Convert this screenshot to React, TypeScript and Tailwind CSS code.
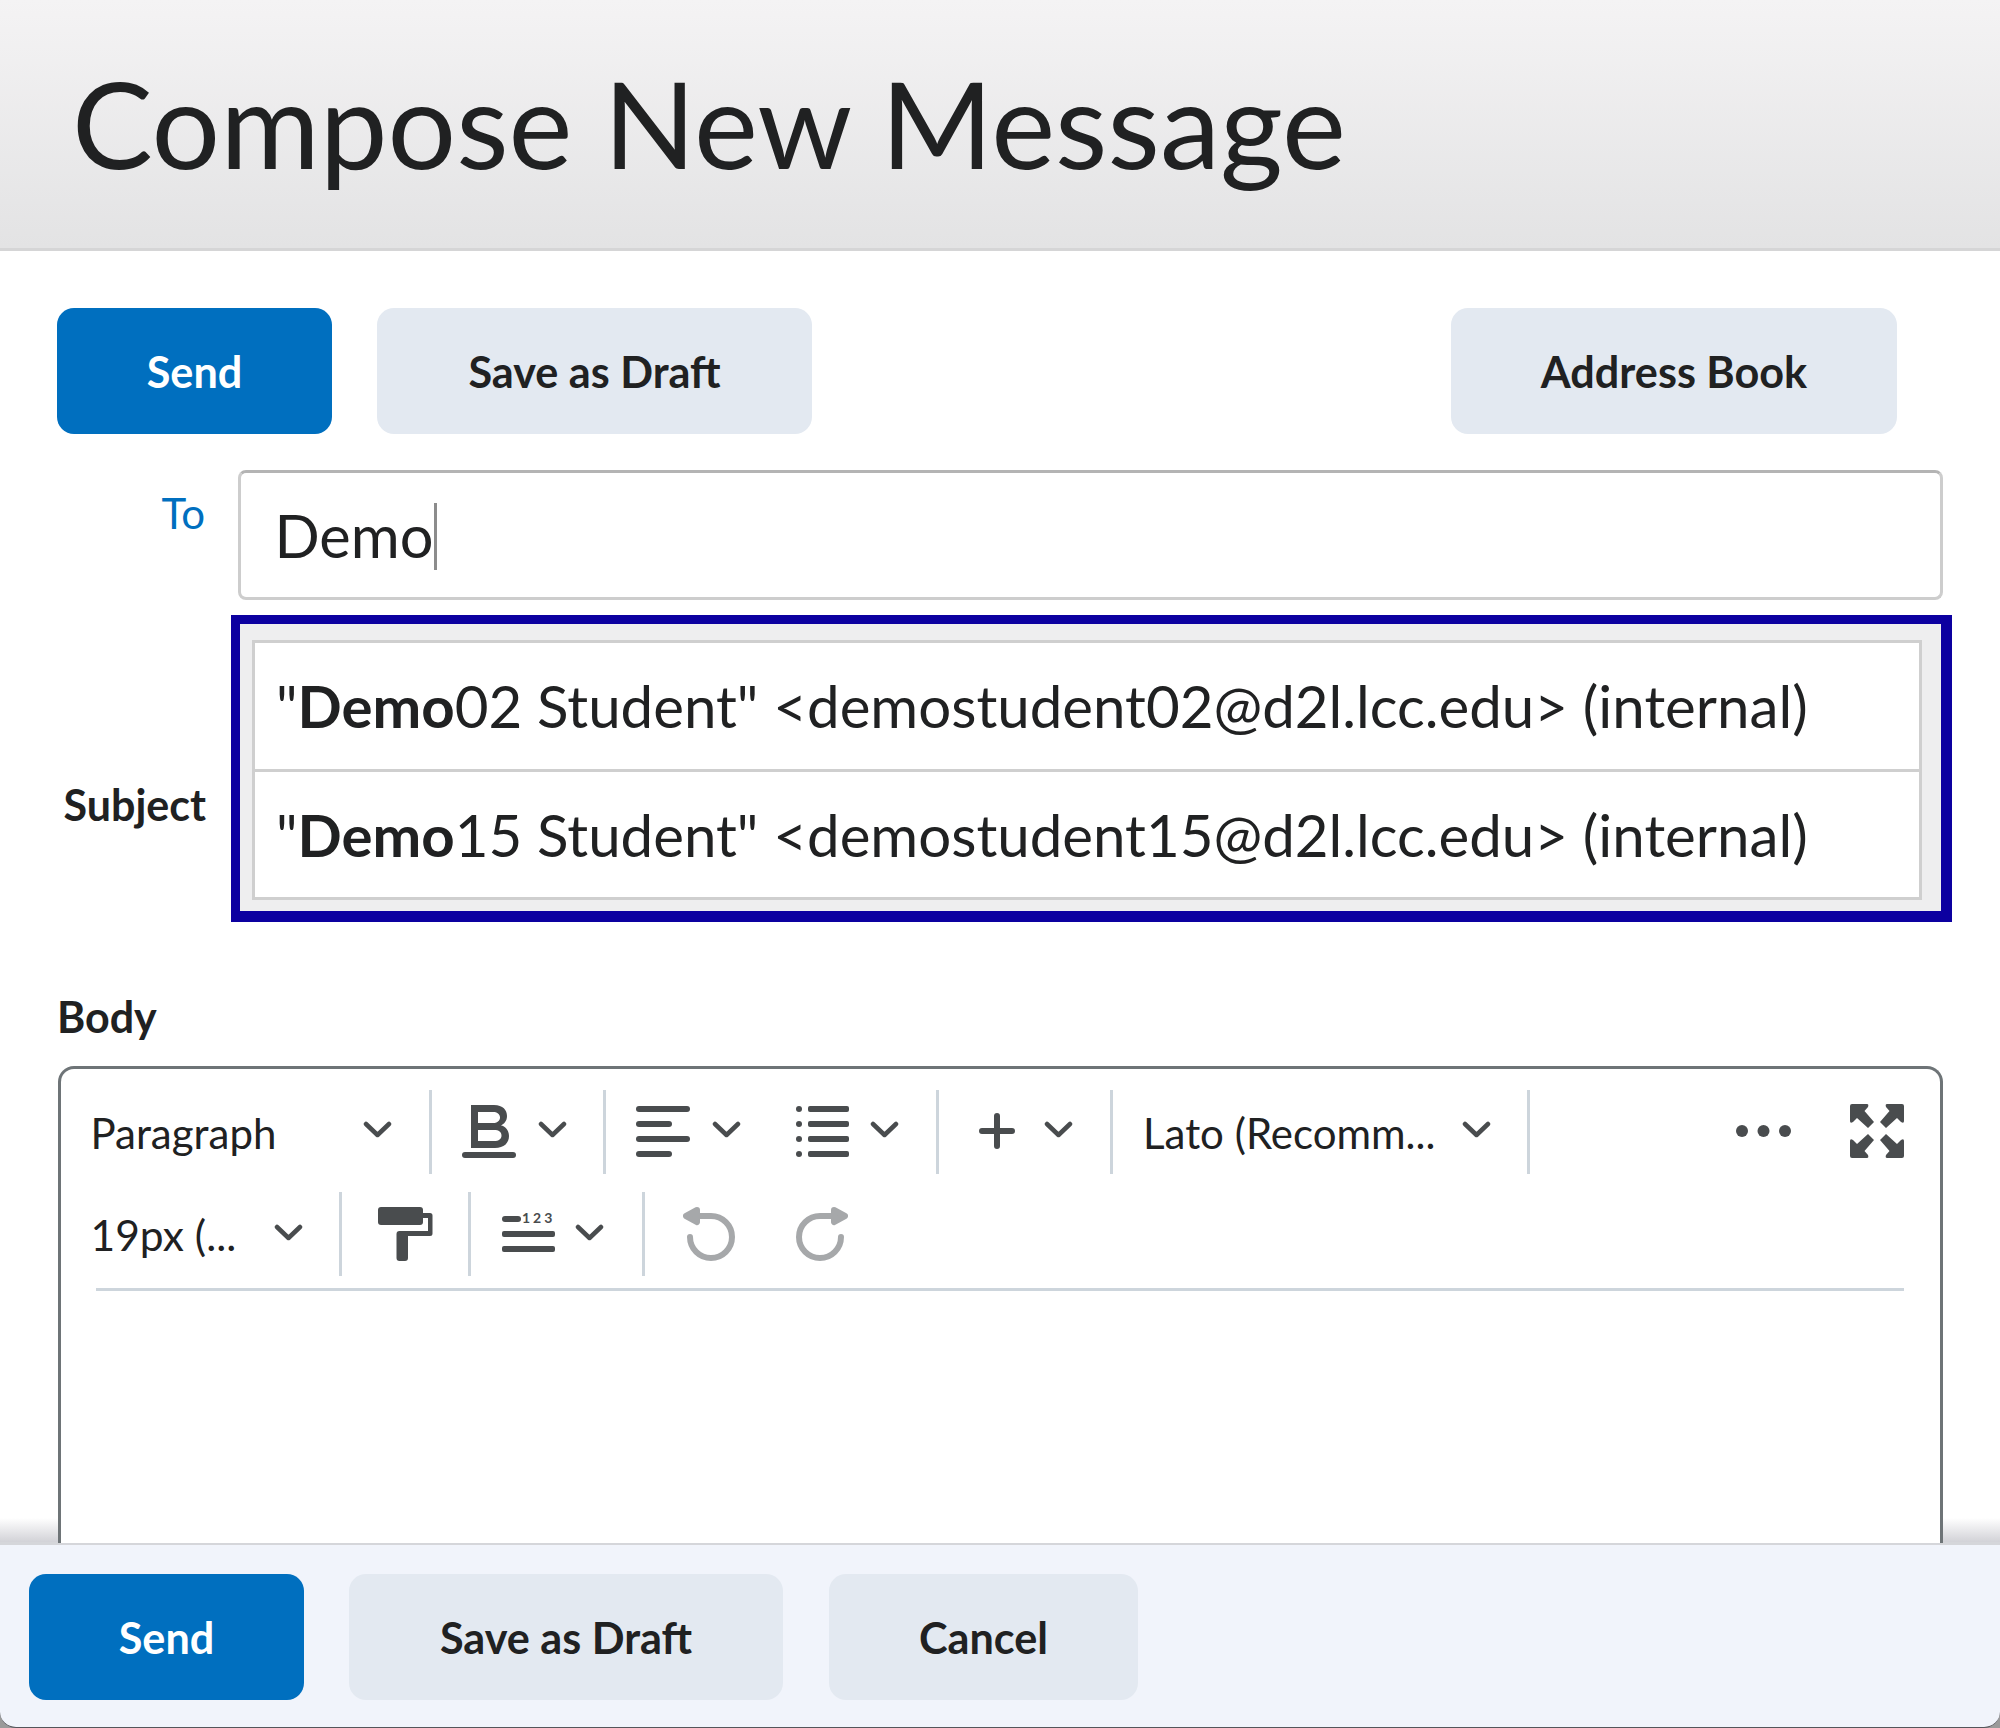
const LATO = "font-['Lato','Liberation_Sans',sans-serif]";

const ICON = "#494c4e";

function Chev({ ml, className = "" }: { ml: string; className?: string }) {
  return (
    <svg viewBox="0 0 29 17" className={`h-[17px] w-[29px] shrink-0 ${ml} ${className}`} fill="none" stroke={ICON} strokeWidth="4.500" strokeLinecap="round" strokeLinejoin="round">
      <polyline points="3,3 14.5,14 26,3" />
    </svg>
  );
}

function Sep({ ml }: { ml: string }) {
  return <div className={`h-[84px] w-[3px] shrink-0 bg-[#cdd5dc] ${ml}`} />;
}

function Bar({ y, x = 0, w }: { y: number; x?: number; w: number }) {
  return <rect x={x} y={y} width={w} height="6" rx="3" fill={ICON} />;
}

function Btn({ label, primary, className = "" }: { label: string; primary?: boolean; className?: string }) {
  return (
    <button
      className={`flex h-[126px] shrink-0 items-center justify-center rounded-[17px] text-[43.2px] font-bold ${
        primary ? "bg-[#006fbf] text-white" : "bg-[#e3e9f1] text-[#202122]"
      } ${className}`}
    >
      {label}
    </button>
  );
}

function Suggestion({ num }: { num: string }) {
  return (
    <div className="flex h-[125.5px] items-center whitespace-pre pl-[21px] text-[58.2px] text-[#202122]">
      "<b>Demo</b>
      {num} Student" &lt;demostudent{num}@d2l.lcc.edu&gt; (internal)
    </div>
  );
}

export default function App() {
  return (
    <div className={`flex h-[1728px] w-[2000px] flex-col overflow-hidden bg-[#9a9a9a] text-[#202122] ${LATO}`}>
      {/* header */}
      <div className="flex h-[251px] shrink-0 items-center border-b-[3px] border-[#d5d5d6] bg-gradient-to-b from-[#f4f3f4] to-[#e3e3e4] pb-[4px] pl-[72px]">
        <h1 className="whitespace-nowrap text-[121px] font-normal leading-none">Compose New Message</h1>
      </div>

      <main className="relative min-h-0 flex-1 bg-white pt-[57px]">
        {/* soft shadow over the footer */}
        <div className="absolute inset-x-0 bottom-0 h-[24px] bg-gradient-to-b from-transparent to-[#d2d2d7]" />

        <div className="flex pl-[57px] pr-[103px]">
          <Btn label="Send" primary className="w-[275px]" />
          <Btn label="Save as Draft" className="ml-[45px] w-[435px]" />
          <Btn label="Address Book" className="ml-auto w-[446px]" />
        </div>

        {/* To row */}
        <div className="relative mt-[36px] flex">
          <div className="w-[205px] pt-[12px] text-right text-[42px] text-[#006fbf]">To</div>
          <div className="ml-[33px] flex h-[130px] w-[1705px] items-center rounded-[8px] border-[3px] border-[#cdcdcd] border-t-[#b4b4b4] pl-[33.5px] pt-[2px] text-[59.5px]">
            Demo
            <span className="ml-[1px] h-[67px] w-[3px] bg-[#8c8c8c]" />
          </div>

          {/* suggestions dropdown */}
          <div className="absolute left-[231px] top-[145px] z-20 w-[1721px] border-[11px] border-l-[9px] border-t-[9px] border-[#0c00a0] bg-[#eeeeef] pb-[11px] pl-[12px] pr-[19px] pt-[16px]">
            <div className="border-[3px] border-[#cfcfcf] bg-white">
              <Suggestion num="02" />
              <div className="h-[3px] bg-[#cfcfcf]" />
              <Suggestion num="15" />
            </div>
          </div>
        </div>

        {/* Subject row */}
        <div className="mt-[180px] w-[206px] whitespace-nowrap text-right text-[43px] font-bold leading-[50px]">Subject</div>

        {/* Body */}
        <div className="mt-[162px] pl-[57px] text-[43px] font-bold leading-[50px]">Body</div>
        <div className="relative z-10 ml-[58px] mt-[24px] h-[477px] w-[1885px] rounded-t-[16px] border-[3px] border-b-0 border-[#6e7477] bg-white pt-[21px]">
          <div className="flex h-[84px] items-center text-[42px]">
            <div className="ml-[29.5px] w-[272.5px] shrink-0 pt-[2px]">Paragraph</div>
            <Chev ml="" className="mb-[6px]" />
            <Sep ml="ml-[37px]" />
            <svg viewBox="0 0 54 53" className="mb-[1px] ml-[30px] h-[53px] w-[54px] shrink-0" fill={ICON}>
              <path
                fillRule="evenodd"
                d="M9 0H32C41 0 45 5 45 11C45 16 42 19 39 20.500C43 21 47 25 47 31C47 38 42 43 33 43H9ZM16 7V18H31C35 18 38 16 38 12.500C38 9 35 7 31 7ZM16 25V36H32C37 36 39.500 34 39.500 30.500C39.500 27 37 25 32 25Z"
              />
              <rect x="0" y="47" width="54" height="6" rx="3" />
            </svg>
            <Chev ml="ml-[21.5px]" className="mb-[6px]" />
            <Sep ml="ml-[36.5px]" />
            <svg viewBox="0 0 54 51" className="mb-[2px] ml-[30px] h-[51px] w-[54px] shrink-0">
              <Bar y={0} w={54} />
              <Bar y={15} w={36} />
              <Bar y={30} w={54} />
              <Bar y={45} w={36} />
            </svg>
            <Chev ml="ml-[21.5px]" className="mb-[5px]" />
            <svg viewBox="0 0 53 51" className="mb-[2px] ml-[55.5px] h-[51px] w-[53px] shrink-0" fill={ICON}>
              {[0, 15, 30, 45].map((y) => (
                <g key={y}>
                  <circle cx="3" cy={y + 3} r="3" />
                  <rect x="12" y={y} width="41" height="6" rx="2" />
                </g>
              ))}
            </svg>
            <Chev ml="ml-[20.5px]" className="mb-[5px]" />
            <Sep ml="ml-[37.5px]" />
            <svg viewBox="0 0 36 36" className="mb-[2px] ml-[40px] h-[36px] w-[36px] shrink-0" stroke={ICON} strokeWidth="6" strokeLinecap="round">
              <path d="M3 18H33M18 3V33" />
            </svg>
            <Chev ml="ml-[28.5px]" className="mb-[5px]" />
            <Sep ml="ml-[37.5px]" />
            <div className="ml-[30px] w-[319px] shrink-0 whitespace-nowrap pt-[2px]">Lato (Recomm...</div>
            <Chev ml="" className="mb-[6px]" />
            <Sep ml="ml-[36px]" />
            <svg viewBox="0 0 55 12" className="mb-[2px] ml-auto h-[12px] w-[55px] shrink-0" fill={ICON}>
              <circle cx="6" cy="6" r="6" />
              <circle cx="27.500" cy="6" r="6" />
              <circle cx="49" cy="6" r="6" />
            </svg>
            <svg viewBox="0 0 54 54" className="mb-[2px] ml-[59px] mr-[36px] h-[54px] w-[54px] shrink-0" fill={ICON}>
              {["", "translate(54 0) scale(-1 1)", "translate(0 54) scale(1 -1)", "translate(54 54) scale(-1 -1)"].map((t) => (
                <path key={t} transform={t} d="M2 0H17Q19 0 18 3L14.500 7L24 18L18 24L7 14L3 18Q0 20 0 17V2Q0 0 2 0Z" />
              ))}
            </svg>
          </div>

          <div className="mt-[18px] flex h-[84px] items-center text-[42.5px]">
            <div className="ml-[29.5px] w-[183px] shrink-0 whitespace-nowrap pt-[2px]">19px (...</div>
            <Chev ml="" className="mb-[4px]" />
            <Sep ml="ml-[36.5px]" />
            <svg viewBox="0 0 55 54" className="mb-[1px] ml-[35.5px] h-[54px] w-[55px] shrink-0" fill={ICON}>
              <rect x="0" y="0" width="45" height="18" rx="3" />
              <path d="M45 6H52Q54.500 6 54.500 8.500V26.500Q54.500 29 52 29H30V51Q30 54 27 54H21.500Q18.500 54 18.500 51V27Q18.500 24 21.500 24H50V11H45Z" />
            </svg>
            <Sep ml="ml-[35px]" />
            <svg viewBox="0 0 53 37" className="ml-[31px] h-[37px] w-[53px] shrink-0 overflow-visible" fill={ICON}>
              <rect x="0" y="0" width="19" height="6" rx="3" />
              <text x="20" y="7" fontSize="14" fontWeight="700" letterSpacing="3" fontFamily="Lato, sans-serif">123</text>
              <rect x="0" y="15" width="53" height="6" rx="2" />
              <rect x="0" y="30" width="53" height="6" rx="2" />
            </svg>
            <Chev ml="ml-[20.5px]" className="mb-[4px]" />
            <Sep ml="ml-[37.5px]" />
            <svg viewBox="0 0 52 54" className="mb-[1px] ml-[38px] h-[54px] w-[52px] shrink-0" fill="none" stroke="#a6a8aa" strokeWidth="6" strokeLinecap="round" strokeLinejoin="round">
              <path d="M7 30A21 21 0 1 0 28 9H14" />
              <path d="M14 3L3 9L14 15Z" fill="#a6a8aa" />
            </svg>
            <svg viewBox="0 0 52 54" className="mb-[1px] ml-[61px] h-[54px] w-[52px] shrink-0" fill="none" stroke="#a6a8aa" strokeWidth="6" strokeLinecap="round" strokeLinejoin="round">
              <g transform="translate(52 0) scale(-1 1)">
                <path d="M7 30A21 21 0 1 0 28 9H14" />
                <path d="M14 3L3 9L14 15Z" fill="#a6a8aa" />
              </g>
            </svg>
          </div>

          <div className="ml-[35px] mr-[36px] mt-[12px] h-[3px] bg-[#cdd5dc]" />
        </div>
      </main>

      {/* footer */}
      <footer className="flex h-[186px] shrink-0 items-start rounded-b-[16px] border-b border-t-[3px] border-b-[#55555a] border-t-[#d5d6da] bg-[#f1f4fb] pl-[29px] pt-[29px]">
        <Btn label="Send" primary className="w-[275px]" />
        <Btn label="Save as Draft" className="ml-[45px] w-[434px]" />
        <Btn label="Cancel" className="ml-[46px] w-[309px]" />
      </footer>
    </div>
  );
}
